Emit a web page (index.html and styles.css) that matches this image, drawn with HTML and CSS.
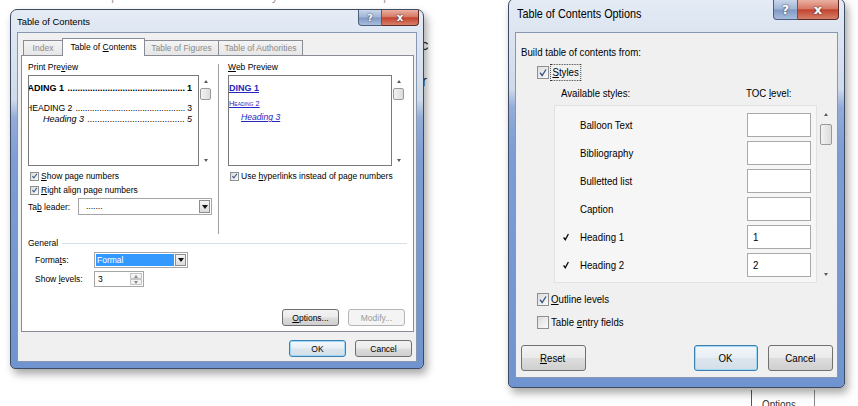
FILE: index.html
```html
<!DOCTYPE html>
<html>
<head>
<meta charset="utf-8">
<title>Table of Contents</title>
<link rel="stylesheet" href="styles.css">
</head>
<body>
<div class="desk">
  <div class="bg-stub stub1">Caption</div>
  <div class="bg-stub stub2">Entry</div>
  <div class="bg-stub stub3">Caption</div>
  <div class="bg-letter let1">c</div>
  <div class="bg-letter let2">r</div>
  <div class="bg-button"><span class="sq">Options</span></div>

  <section class="win win-toc">
    <header class="titlebar">
      <span class="title">Table of Contents</span>
      <div class="caps"><span class="cap help">?</span><span class="cap close">x</span></div>
    </header>
    <div class="client">
      <div class="tabs">
        <span class="tab t-index">Index</span>
        <span class="tab t-toc active">Table of <u>C</u>ontents</span>
        <span class="tab t-fig">Table of Figures</span>
        <span class="tab t-auth">Table of Authorities</span>
      </div>
      <div class="panel">
        <div class="previews">
          <div class="col col-left">
            <div class="lbl">Print Pre<u>v</u>iew</div>
            <div class="pv-row">
              <div class="pv-box print">
                <div class="toc-line l1"><span class="t">HEADING 1</span><span class="dots">...............................................</span><span class="n">1</span></div>
                <div class="toc-line l2"><span class="t">HEADING 2</span><span class="dots">..............................................</span><span class="n">3</span></div>
                <div class="toc-line l3"><span class="t">Heading 3</span><span class="dots">.......................................</span><span class="n">5</span></div>
              </div>
              <div class="vscroll"><span class="arr"><i class="tri up"></i></span><span class="thumb"></span><span class="sp"></span><span class="arr"><i class="tri dn"></i></span></div>
            </div>
            <div class="chk"><span class="box"><svg viewBox="0 0 10 10"><path d="M2 5.2 4.2 7.8 8.3 2" fill="none" stroke="#3b5486" stroke-width="1.5"/></svg></span><span><u>S</u>how page numbers</span></div>
            <div class="chk chk2"><span class="box"><svg viewBox="0 0 10 10"><path d="M2 5.2 4.2 7.8 8.3 2" fill="none" stroke="#3b5486" stroke-width="1.5"/></svg></span><span><u>R</u>ight align page numbers</span></div>
            <div class="leader-row">
              <span class="leader-lbl">Ta<u>b</u> leader:</span>
              <div class="combo leader"><span class="combo-val">.......</span><span class="combo-btn"><i class="tri dn big"></i></span></div>
            </div>
          </div>
          <div class="vdiv"></div>
          <div class="col col-right">
            <div class="lbl"><u>W</u>eb Preview</div>
            <div class="pv-row">
              <div class="pv-box web">
                <div class="w1"><span>HEADING 1</span></div>
                <div class="w2"><span>Heading 2</span></div>
                <div class="w3"><span>Heading 3</span></div>
              </div>
              <div class="vscroll"><span class="arr"><i class="tri up"></i></span><span class="thumb"></span><span class="sp"></span><span class="arr"><i class="tri dn"></i></span></div>
            </div>
            <div class="chk"><span class="box"><svg viewBox="0 0 10 10"><path d="M2 5.2 4.2 7.8 8.3 2" fill="none" stroke="#3b5486" stroke-width="1.5"/></svg></span><span>Use <u>h</u>yperlinks instead of page numbers</span></div>
          </div>
        </div>
        <div class="general">
          <div class="group-head"><span>General</span></div>
          <div class="frow">
            <span class="flbl">Forma<u>t</u>s:</span>
            <div class="combo fmt"><span class="combo-val sel">Formal</span><span class="combo-btn"><i class="tri dn big"></i></span></div>
          </div>
          <div class="frow frow2">
            <span class="flbl">Show <u>l</u>evels:</span>
            <div class="spin"><span class="spin-val">3</span><span class="spin-btns"><span><i class="tri up"></i></span><span><i class="tri dn"></i></span></span></div>
          </div>
        </div>
        <div class="btnrow panel-btns">
          <button class="btn"><u>O</u>ptions...</button>
          <button class="btn" disabled>Modify...</button>
        </div>
      </div>
      <div class="btnrow dlg-btns">
        <button class="btn default">OK</button>
        <button class="btn">Cancel</button>
      </div>
    </div>
  </section>

  <section class="win win-opt">
    <header class="titlebar">
      <span class="title"><span class="sq">Table of Contents Options</span></span>
      <div class="caps"><span class="cap help">?</span><span class="cap close">x</span></div>
    </header>
    <div class="client">
      <div class="build"><span class="sq">Build table of contents from:</span></div>
      <div class="ochk styles-row"><span class="box"><svg viewBox="0 0 12 12"><path d="M2.5 6.3 5 9.6 9.6 2.4" fill="none" stroke="#3b5486" stroke-width="1.6"/></svg></span><span class="focus sq"><u>S</u>tyles</span></div>
      <div class="heads"><span class="h-avail"><span class="sq">Available styles:</span></span><span class="h-toc"><span class="sq">TOC <u>l</u>evel:</span></span></div>
      <div class="list-wrap">
        <div class="list">
          <div class="lrow"><span class="mk"></span><span class="nm"><span class="sq">Balloon Text</span></span><span class="lv"></span></div>
          <div class="lrow"><span class="mk"></span><span class="nm"><span class="sq">Bibliography</span></span><span class="lv"></span></div>
          <div class="lrow"><span class="mk"></span><span class="nm"><span class="sq">Bulletted list</span></span><span class="lv"></span></div>
          <div class="lrow"><span class="mk"></span><span class="nm"><span class="sq">Caption</span></span><span class="lv"></span></div>
          <div class="lrow"><span class="mk"><svg viewBox="0 0 8 10"><path d="M0.8 5.6 3 8.6 7.2 1" fill="none" stroke="#000" stroke-width="1.7"/></svg></span><span class="nm"><span class="sq">Heading 1</span></span><span class="lv"><span class="sq">1</span></span></div>
          <div class="lrow"><span class="mk"><svg viewBox="0 0 8 10"><path d="M0.8 5.6 3 8.6 7.2 1" fill="none" stroke="#000" stroke-width="1.7"/></svg></span><span class="nm"><span class="sq">Heading 2</span></span><span class="lv"><span class="sq">2</span></span></div>
        </div>
        <div class="vscroll big-scroll"><span class="arr"><i class="tri up"></i></span><span class="thumb"></span><span class="sp"></span><span class="arr"><i class="tri dn"></i></span></div>
      </div>
      <div class="ochk outline-row"><span class="box"><svg viewBox="0 0 12 12"><path d="M2.5 6.3 5 9.6 9.6 2.4" fill="none" stroke="#3b5486" stroke-width="1.6"/></svg></span><span class="sq"><u>O</u>utline levels</span></div>
      <div class="ochk entry-row"><span class="box"></span><span class="sq">Table <u>e</u>ntry fields</span></div>
      <div class="obtns">
        <button class="btn reset"><span class="sq"><u>R</u>eset</span></button>
        <button class="btn default ok"><span class="sq sqc">OK</span></button>
        <button class="btn cancel"><span class="sq sqc">Cancel</span></button>
      </div>
    </div>
  </section>
</div>
</body>
</html>
```

FILE: styles.css
```css
* { box-sizing: border-box; }
html, body { margin: 0; padding: 0; background: #fff; }
body { width: 858px; height: 406px; overflow: hidden; font-family: "Liberation Sans", Arial, sans-serif; color: #000; }
.desk { position: relative; width: 858px; height: 406px; overflow: hidden; }

/* narrow text: the reference dialog is horizontally compressed */
.sq { display: inline-block; transform: scaleX(0.82); transform-origin: 0 50%; white-space: nowrap; }
.sqc { transform-origin: 50% 50%; }

/* background document bits */
.bg-stub { position: absolute; top: -11px; font-size: 12px; color: #9a9a9a; }
.stub1 { left: 96px; }
.stub2 { left: 250px; }
.stub3 { left: 368px; }
.bg-letter { position: absolute; font-size: 15px; color: #222; }
.let1 { left: 421px; top: 36px; }
.let2 { left: 422px; top: 72px; }
.bg-button { position: absolute; left: 751px; top: 390px; width: 64px; height: 24px; border-left: 1px solid #555; border-right: 1px solid #888; padding: 8px 0 0 10px; font-size: 12px; color: #333; }

/* window frame */
.win {
  position: absolute;
  display: flex;
  flex-direction: column;
  border: 1px solid #3d4c63;
  border-radius: 7px 7px 5px 5px;
  background: linear-gradient(180deg, #e4ebf5 0px, #cfdaea 90px, #93acd9 108px, #7d9dd4 150px, #7094cf 100%);
  box-shadow: 3px 5px 8px rgba(0, 0, 0, 0.35);
}
.titlebar { display: flex; justify-content: space-between; align-items: flex-start; flex: none; }
.caps { display: flex; }
.cap { display: flex; align-items: center; justify-content: center; color: #fff; font-weight: bold; font-family: "DejaVu Sans", sans-serif; text-shadow: 0 0 2px #223; }
.help { background: linear-gradient(180deg, #c9d6ea 0%, #9fb4d6 48%, #7f99c4 52%, #a8bddd 100%); border: 1px solid #4e5f7e; border-top: none; border-radius: 0 0 0 4px; }
.close { background: linear-gradient(180deg, #eab0a2 0%, #d77a66 45%, #c3442f 52%, #d6806a 100%); border: 1px solid #5c2b25; border-top: none; border-left: none; border-radius: 0 0 4px 0; }

.client { flex: 1; display: flex; flex-direction: column; background: #f0f0f0; border: 1px solid #8797b0; }

/* ---------- left dialog ---------- */
.win-toc { left: 10px; top: 9px; width: 414px; height: 360px; padding: 0 6px 6px 6px; font-size: 8.5px; }
.win-toc .titlebar { height: 22px; }
.win-toc .title { padding: 6px 0 0 0; font-size: 9.4px; line-height: 12px; }
.win-toc .caps { margin-right: -2px; }
.win-toc .help { width: 24px; height: 16px; font-size: 9px; }
.win-toc .close { width: 37px; height: 16px; font-size: 10px; }
.win-toc .client { padding: 5px 2px 4px 3px; }

.tabs { display: flex; align-items: flex-end; height: 17px; margin-left: 2px; position: relative; z-index: 1; }
.tab { height: 15px; line-height: 14px; text-align: center; border: 1px solid #898c95; border-bottom: none; border-right: none; background: linear-gradient(180deg, #f4f4f4, #e6e6e6); color: #8a8a8a; }
.t-index { width: 39px; }
.t-toc { width: 83px; }
.t-fig { width: 73px; }
.t-auth { width: 85px; border-right: 1px solid #898c95; }
.tab.active { height: 18px; line-height: 16px; margin-bottom: -1px; background: #fff; color: #000; border-right: 1px solid #898c95; }
.tab.active + .tab { border-left: none; }

.panel { height: 277px; flex: none; background: #fff; border: 1px solid #898c95; padding: 6px 8px 0 6px; display: flex; flex-direction: column; }
.previews { display: flex; height: 172px; }
.col-left { width: 184px; }
.col-right { width: 177px; }
.vdiv { width: 1px; margin: 2px 9px 0 6px; background: #a0a0a0; height: 170px; }
.lbl { height: 10px; line-height: 10px; margin-bottom: 3px; }
.pv-row { display: flex; height: 91px; }
.pv-box { flex: 1; background: #fff; border: 1px solid #7a7a7a; overflow: hidden; padding: 7px 6px 0 0; }
.vscroll { width: 13px; display: flex; flex-direction: column; align-items: center; }
.vscroll .arr { height: 12px; display: flex; align-items: center; justify-content: center; width: 100%; }
.vscroll .thumb { width: 11px; height: 12px; margin-top: 1px; border: 1px solid #9a9a9a; border-radius: 2px; background: linear-gradient(90deg, #f2f2f2, #dcdcdc); }
.vscroll .sp { flex: 1; }
.tri { display: block; width: 0; height: 0; border-left: 2.5px solid transparent; border-right: 2.5px solid transparent; }
.tri.up { border-bottom: 3px solid #5a5a5a; }
.tri.dn { border-top: 3px solid #5a5a5a; }
.tri.big { border-left-width: 3px; border-right-width: 3px; border-top-width: 4px; border-top-color: #111; }

.toc-line { display: flex; white-space: nowrap; }
.toc-line .dots { flex: 1; overflow: hidden; margin: 0 2px; text-align: right; }
.toc-line .n { flex: none; }
.l1 { font-weight: bold; font-size: 9px; line-height: 11px; }
.l1 .t { margin-left: -14px; }
.l2 { font-size: 8.6px; line-height: 10px; margin-top: 9px; }
.l2 .t { margin-left: -3px; }
.l3 { font-style: italic; font-size: 9px; line-height: 11px; margin-top: 1px; padding-left: 14px; }

.web { padding-left: 0; color: #2525c0; white-space: nowrap; }
.web span { text-decoration: underline; }
.w1 { font-weight: bold; font-size: 9px; line-height: 11px; margin-left: -19px; }
.w2 { font-variant: small-caps; font-size: 7.4px; line-height: 9px; margin-top: 5px; }
.w3 { font-style: italic; font-size: 8.6px; line-height: 10px; margin-top: 4px; padding-left: 12px; }

.chk { display: flex; align-items: center; height: 10px; margin-top: 5px; padding-left: 2px; white-space: nowrap; }
.chk2 { margin-top: 4px; }
.chk .box, .ochk .box { flex: none; display: flex; align-items: center; justify-content: center; border: 1px solid #8e8f8f; background: linear-gradient(135deg, #dcdcdc, #fbfbfb); }
.chk .box { width: 9px; height: 9px; margin-right: 2px; }
.chk .box svg { width: 8px; height: 8px; }

.leader-row { display: flex; align-items: center; height: 17px; margin-top: 3px; }
.leader-lbl { width: 50px; }
.combo { display: flex; align-items: stretch; border: 1px solid #a5a5a5; background: #fff; }
.combo-val { flex: 1; padding-left: 7px; line-height: 15px; }
.combo-btn { width: 11px; display: flex; align-items: center; justify-content: center; border: 1px solid #8c8c8c; margin: 1px; background: linear-gradient(180deg, #f4f4f4, #dcdcdc); }
.leader { width: 134px; height: 17px; }

.general { margin-top: 4px; }
.group-head { display: flex; align-items: center; height: 10px; line-height: 10px; margin-right: -2px; }
.group-head::after { content: ""; flex: 1; height: 1px; background: #d5dfe5; margin-left: 4px; }
.frow { display: flex; align-items: center; height: 16px; margin-top: 4px; padding-left: 7px; }
.frow2 { margin-top: 3px; }
.flbl { width: 59px; }
.fmt { width: 94px; height: 16px; }
.combo-val.sel { background: #3399ff; color: #fff; margin: 1px 0 1px 1px; padding-left: 1px; line-height: 12px; }
.spin { display: flex; width: 50px; height: 16px; border: 1px solid #a5a5a5; background: #fff; }
.spin-val { flex: 1; padding-left: 3px; line-height: 14px; }
.spin-btns { width: 12px; display: flex; flex-direction: column; margin: 1px; }
.spin-btns span { flex: 1; display: flex; align-items: center; justify-content: center; border: 1px solid #c5c5c5; background: #f2f2f2; }
.spin-btns .tri.up { border-bottom-color: #8a8a8a; }
.spin-btns .tri.dn { border-top-color: #8a8a8a; }

.btnrow { display: flex; justify-content: flex-end; gap: 9px; }
.btn { font: inherit; color: #000; padding: 0; border: 1px solid #707070; border-radius: 3px; background: linear-gradient(180deg, #f2f2f2 0%, #ebebeb 48%, #dddddd 52%, #cfcfcf 100%); cursor: default; }
.btn.default { border-color: #3c7fb1; box-shadow: inset 0 0 0 1px #9ed8f6; background: linear-gradient(180deg, #f4f8fb 0%, #e8eef4 48%, #dde6ee 52%, #d3dee8 100%); }
.btn:disabled { border-color: #b5b5b5; background: #f4f4f4; color: #9a9a9a; }
.panel-btns { margin-top: 22px; }
.panel-btns .btn { width: 57px; height: 17px; }
.dlg-btns { margin-top: 8px; margin-right: 2px; }
.dlg-btns .btn { width: 57px; height: 17px; }

/* ---------- right dialog ---------- */
.win-opt { left: 508px; top: -2px; width: 337px; height: 390px; padding: 0 6px 9px 6px; font-size: 11.8px; }
.win-opt .titlebar { height: 33px; }
.win-opt .title { padding: 7px 0 0 2px; font-size: 13.2px; line-height: 16px; }
.win-opt .caps { margin-top: 1px; margin-right: -1px; }
.win-opt .help { width: 25px; height: 20px; font-size: 12px; }
.win-opt .close { width: 41px; height: 20px; font-size: 13px; }
.win-opt .client { padding: 12px 4px 6px 5px; }

.build { height: 14px; line-height: 14px; }
.ochk { display: flex; align-items: center; padding-left: 16px; white-space: nowrap; }
.ochk .box { width: 12px; height: 13px; margin-right: 2px; }
.ochk .box svg { width: 11px; height: 11px; }
.styles-row { height: 16px; margin-top: 5px; }
.focus { border: 1px dotted #333; padding: 1px 2px; line-height: 13px; margin-left: -1px; }
.heads { display: flex; height: 14px; line-height: 14px; margin-top: 6px; padding-left: 40px; }
.h-avail { width: 185px; }
.list-wrap { display: flex; margin-top: 5px; margin-left: 33px; height: 178px; }
.list { width: 263px; height: 178px; overflow: hidden; background: #f6f6f6; border: 1px solid #e2e2e2; padding: 7px 0 0 8px; }
.lrow { display: flex; align-items: center; height: 24px; margin-bottom: 4px; }
.mk { width: 17px; display: flex; align-items: center; }
.mk svg { width: 6px; height: 8px; }
.nm { width: 167px; }
.lv { width: 64px; height: 24px; background: #fff; border: 1px solid #a9a9a9; padding-left: 5px; line-height: 22px; }
.big-scroll { width: 15px; padding-left: 2px; }
.big-scroll .arr { height: 18px; }
.big-scroll .thumb { width: 12px; height: 21px; margin-top: 1px; }
.outline-row { height: 14px; margin-top: 9px; }
.entry-row { height: 14px; margin-top: 9px; }
.obtns { display: flex; margin-top: 16px; }
.obtns .btn { height: 26px; }
.reset { width: 65px; text-align: left; padding-left: 18px; }
.ok { width: 64px; margin-left: auto; }
.cancel { width: 65px; margin-left: 10px; }
```
